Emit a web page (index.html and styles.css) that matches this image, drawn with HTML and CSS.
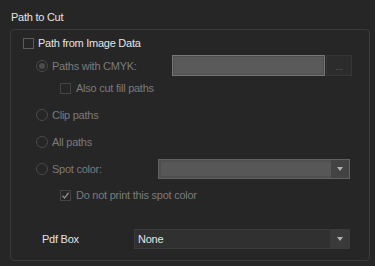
FILE: index.html
```html
<!DOCTYPE html>
<html>
<head>
<meta charset="utf-8">
<link rel="stylesheet" href="styles.css">
</head>
<body>
<div class="title">Path to Cut</div>
<div class="group">
  <div class="row r1">
    <span class="cb"></span><span class="lbl">Path from Image Data</span>
  </div>
  <div class="row r2 indent-radio">
    <div class="lead w136"><span class="radio on"></span><span class="lbl dis">Paths with CMYK:</span></div>
    <div class="field"></div>
    <div class="dots">...</div>
  </div>
  <div class="row r3 indent-sub">
    <span class="cb dcb"></span><span class="lbl dis sub">Also cut fill paths</span>
  </div>
  <div class="row r4 indent-radio">
    <span class="radio"></span><span class="lbl dis">Clip paths</span>
  </div>
  <div class="row r5 indent-radio">
    <span class="radio"></span><span class="lbl dis">All paths</span>
  </div>
  <div class="row r6 indent-radio">
    <div class="lead w122"><span class="radio"></span><span class="lbl dis">Spot color:</span></div>
    <div class="combo light"><div class="cval"></div><div class="carrow"><span class="tri"></span></div></div>
  </div>
  <div class="row r7 indent-sub">
    <span class="cb dcb checked"><svg width="9" height="9" viewBox="0 0 9 9"><path d="M1.5 4.8 L3.6 7 L7.6 1.8" fill="none" stroke="#8a8a8a" stroke-width="1.4"/></svg></span><span class="lbl dis sub">Do not print this spot color</span>
  </div>
  <div class="row r8 indent-pdf">
    <div class="lead w92"><span class="lbl">Pdf Box</span></div>
    <div class="combo dark"><div class="cval"><span class="none">None</span></div><div class="carrow"><span class="tri"></span></div></div>
  </div>
</div>
</body>
</html>
```
FILE: styles.css
```css
html, body {
  margin: 0;
  padding: 0;
  background: #262626;
}
body {
  width: 375px;
  height: 266px;
  overflow: hidden;
  font-family: "Liberation Sans", Arial, sans-serif;
  font-size: 11px;
  letter-spacing: -0.25px;
  color: #e4e4e4;
}
.title {
  margin: 8px 0 0 11px;
  height: 18px;
  line-height: 18px;
}
.group {
  margin: 3px 5px 0 10px;
  height: 231px;
  border: 1px solid #3a3a3a;
  border-radius: 4px;
  padding-top: 2px;
  box-sizing: border-box;
  height: 232px;
}
.row {
  display: flex;
  align-items: center;
  height: 22px;
}
.r1 { padding-left: 12px; }
.r2 { height: 23px; }
.r4, .r5, .r6 { margin-top: 5px; }
.r7 { margin-top: 4px; }
.r8 { margin-top: 22px; }
.indent-radio { padding-left: 25px; }
.indent-sub { padding-left: 49px; }
.indent-pdf { padding-left: 31px; }
.lead {
  display: flex;
  align-items: center;
  flex: none;
}
.w136 { width: 136px; }
.w122 { width: 122px; }
.w92 { width: 92px; }
.cb {
  width: 11px;
  height: 11px;
  border: 1px solid #5c5c5c;
  box-sizing: border-box;
  background: #262626;
  flex: none;
  display: flex;
  align-items: center;
  justify-content: center;
}
.dcb { border-color: #444; }
.lbl { margin-left: 4px; white-space: nowrap; }
.lbl.sub { margin-left: 5px; }
.w92 .lbl { margin-left: 0; }
.dis { color: #7a7a7a; }
.radio {
  width: 12px;
  height: 12px;
  border: 1px solid #4a4a4a;
  border-radius: 50%;
  box-sizing: border-box;
  flex: none;
  display: flex;
  align-items: center;
  justify-content: center;
}
.radio.on::after {
  content: "";
  width: 6px;
  height: 6px;
  border-radius: 50%;
  background: #4c4c4c;
}
.field {
  width: 153px;
  height: 21px;
  box-sizing: border-box;
  border: 1px solid #777;
  box-shadow: inset 0 0 0 1px #4f4f4f;
  background: #5a5a5a;
}
.dots {
  margin-left: 1px;
  width: 26px;
  height: 21px;
  box-sizing: border-box;
  border: 1px solid #363636;
  background: #2c2c2c;
  color: #666;
  font-size: 9px;
  letter-spacing: 0;
  display: flex;
  align-items: center;
  justify-content: center;
  padding-top: 2px;
}
.combo {
  display: flex;
  box-sizing: border-box;
  height: 20px;
  flex: none;
}
.combo.light {
  width: 192px;
  border: 1px solid #616161;
  background: #4f4f4f;
}
.combo.light .cval {
  flex: 1;
  background: #575757;
  margin: 2px 0 2px 2px;
}
.combo.light .carrow {
  width: 18px;
  background: #434343;
}
.combo.dark {
  width: 216px;
  height: 20px;
  border: 1px solid #3a3a3a;
  background: #333;
}
.combo.dark .cval {
  flex: 1;
  background: #303030;
  display: flex;
  align-items: center;
  padding-left: 3px;
}
.combo.dark .carrow {
  width: 19px;
  background: #3a3a3a;
}
.none { color: #e4e4e4; }
.carrow {
  display: flex;
  align-items: center;
  justify-content: center;
}
.tri {
  width: 0;
  height: 0;
  border-left: 3px solid transparent;
  border-right: 3px solid transparent;
  border-top: 4px solid #b0b0b0;
}
```
